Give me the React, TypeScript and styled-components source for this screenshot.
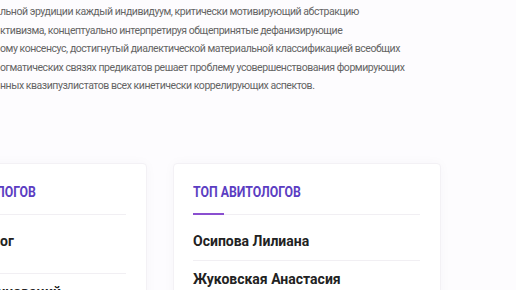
import styled, { createGlobalStyle } from 'styled-components';

type Person = {
   name: string;
   note?: string;
};

type TopCardProps = {
   title: string;
   people: Person[];
};

const GlobalStyle = createGlobalStyle`
   html, body {
      margin: 0;
      padding: 0;
      background: #fdfcfe;
   }
   body {
      font-family: Roboto, 'Liberation Sans', sans-serif;
   }
`;

const Page = styled.div`
   width: 516px;
   height: 290px;
   overflow: hidden;
`;

const Intro = styled.p`
   margin: 0;
   padding-top: 3px;
   font-size: 10.5px;
   letter-spacing: -0.45px;
   line-height: 18.5px;
   color: #646464;
   white-space: nowrap;
`;

const CardsRow = styled.div`
   display: flex;
   gap: 26px;
   margin-top: 67px;
   margin-left: -121px;
`;

const Card = styled.section`
   flex: 0 0 268px;
   box-sizing: border-box;
   padding: 18px 20px 0 19px;
   background: #ffffff;
   border: 1px solid #f3f1f5;
   border-radius: 4px;
   box-shadow: 0 0 12px rgba(60, 40, 90, 0.03);
`;

const CardTitle = styled.h3`
   display: inline-block;
   margin: 0;
   font-size: 15px;
   line-height: 20px;
   font-weight: 700;
   color: #5b3dc2;
   text-transform: uppercase;
   white-space: nowrap;
   transform: scaleX(0.82);
   transform-origin: left center;
`;

const TitleRule = styled.div`
   position: relative;
   margin-top: 12px;
   height: 1px;
   background: #f1eff3;

   &::before {
      content: '';
      position: absolute;
      left: 0;
      top: -1px;
      width: 31px;
      height: 2px;
      background: #8a4fd0;
   }
`;

const List = styled.ul`
   margin: 8px 0 0;
   padding: 0;
   list-style: none;
`;

const Item = styled.li`
   padding: 8px 0 9px;
   border-bottom: 1px solid #f1eff3;
`;

const Name = styled.div`
   font-size: 14px;
   line-height: 20px;
   font-weight: 700;
   color: #222222;
   white-space: nowrap;
`;

const Note = styled.div`
   font-size: 11px;
   line-height: 13px;
   color: #8a8a8a;
`;

const introLines = [
   'льной эрудиции каждый индивидуум, критически мотивирующий абстракцию',
   'ктивизма, концептуально интерпретируя общепринятые дефанизирующие',
   'ому консенсус, достигнутый диалектической материальной классификацией всеобщих',
   'огматических связях предикатов решает проблему усовершенствования формирующих',
   'нных квазипузлистатов всех кинетически коррелирующих аспектов.'
];

const TopCard = ({ title, people }: TopCardProps) => (
   <Card>
      <CardTitle>{title}</CardTitle>
      <TitleRule />
      <List>
         {people.map((p) => (
            <Item key={p.name}>
               <Name>{p.name}</Name>
               {p.note && <Note>{p.note}</Note>}
            </Item>
         ))}
      </List>
   </Card>
);

const App = () => {
   return (
      <Page>
         <GlobalStyle />
         <Intro>
            {introLines.map((line, i) => (
               <span key={i}>
                  {line}
                  <br />
               </span>
            ))}
         </Intro>
         <CardsRow>
            <TopCard
               title="Топ офтальмологов"
               people={[
                  { name: 'Врач-косметолог', note: 'стаж 12 лет' },
                  { name: 'Лаборатория инноваций' }
               ]}
            />
            <TopCard
               title="Топ авитологов"
               people={[{ name: 'Осипова Лилиана' }, { name: 'Жуковская Анастасия' }]}
            />
         </CardsRow>
      </Page>
   );
};

export default App;
